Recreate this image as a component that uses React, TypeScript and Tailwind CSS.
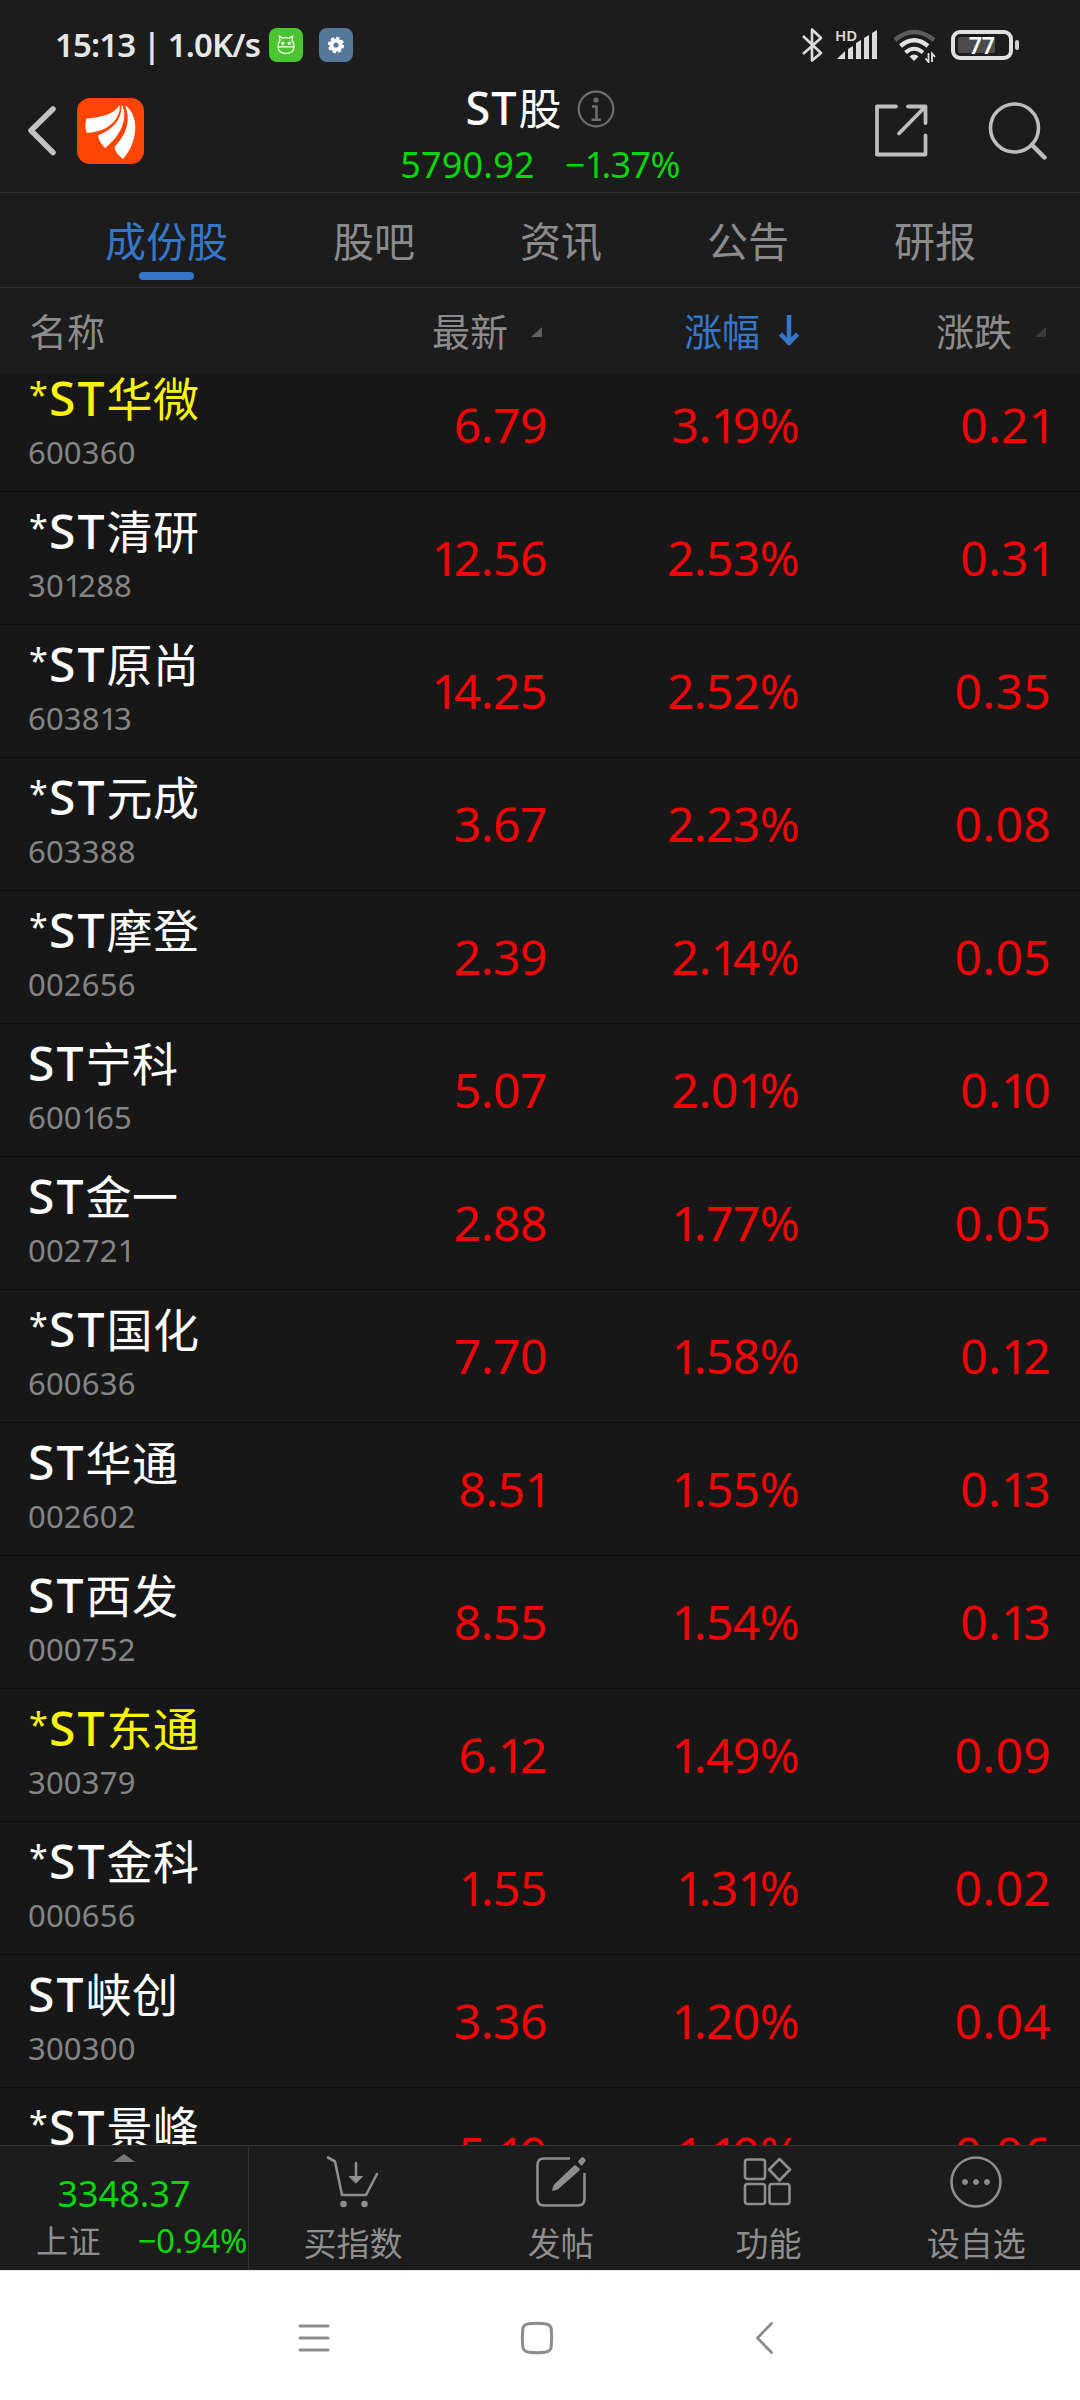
import type { ReactNode } from 'react';
import { clsx } from 'clsx';

interface Stock {
  name: string;
  code: string;
  price: string;
  percent: string;
  change: string;
  highlighted?: boolean;
}

const stocks: Stock[] = [
  { name: '*ST华微', code: '600360', price: '6.79', percent: '3.19%', change: '0.21', highlighted: true },
  { name: '*ST清研', code: '301288', price: '12.56', percent: '2.53%', change: '0.31' },
  { name: '*ST原尚', code: '603813', price: '14.25', percent: '2.52%', change: '0.35' },
  { name: '*ST元成', code: '603388', price: '3.67', percent: '2.23%', change: '0.08' },
  { name: '*ST摩登', code: '002656', price: '2.39', percent: '2.14%', change: '0.05' },
  { name: 'ST宁科', code: '600165', price: '5.07', percent: '2.01%', change: '0.10' },
  { name: 'ST金一', code: '002721', price: '2.88', percent: '1.77%', change: '0.05' },
  { name: '*ST国化', code: '600636', price: '7.70', percent: '1.58%', change: '0.12' },
  { name: 'ST华通', code: '002602', price: '8.51', percent: '1.55%', change: '0.13' },
  { name: 'ST西发', code: '000752', price: '8.55', percent: '1.54%', change: '0.13' },
  { name: '*ST东通', code: '300379', price: '6.12', percent: '1.49%', change: '0.09', highlighted: true },
  { name: '*ST金科', code: '000656', price: '1.55', percent: '1.31%', change: '0.02' },
  { name: 'ST峡创', code: '300300', price: '3.36', percent: '1.20%', change: '0.04' },
  { name: '*ST景峰', code: '000908', price: '5.19', percent: '1.19%', change: '0.06' },
];

const tabs = ['成份股', '股吧', '资讯', '公告', '研报'];

// The figure "1" is set tighter than the other digits
function Figures({ children }: { children: string }) {
  return (
    <>
      {children.split(/(1)/).filter(Boolean).map((part, index) =>
        part === '1' ? <span key={index} className="-tracking-[0.11em]">1</span> : part
      )}
    </>
  );
}

function StockName({ name }: { name: string }) {
  const starred = name.startsWith('*');
  return (
    <>
      {starred && <span className="inline-block w-[21px] pl-px align-[9px] text-[34px] leading-none">*</span>}
      <span className="text-[48px] font-medium tracking-[2px]">ST</span>
      {name.replace(/^\*?ST/, '')}
    </>
  );
}

function StatusBar() {
  return (
    <div className="flex h-20 items-center pt-2.5 pl-[55px] text-[#e6e6e6]">
      <span className="w-[214px] whitespace-nowrap text-[33px] leading-10 font-semibold -tracking-[0.9px]">15:13 | 1.0K/s</span>
      <div className="flex size-[34px] items-center justify-center rounded-lg bg-[#4bc431]">
        <svg width="20" height="22" viewBox="0 0 20 22" fill="none" stroke="#eaffdf" strokeWidth="1.4">
          <path d="M4 6.5 3.3 2.2 6.8 4.2Q10 3 13.2 4.2L16.7 2.2 16 6.5Q18 9 18 12.5C18 17 14.500 19.500 10 19.500S2 17 2 12.500Q2 9 4 6.500ZM2.200 12.800H17.800" />
          <circle cx="6.800" cy="9.300" r="1" fill="#eaffdf" />
          <circle cx="13.200" cy="9.300" r="1" fill="#eaffdf" />
        </svg>
      </div>
      <div className="ml-4 flex size-[34px] items-center justify-center rounded-lg bg-[#54779a]">
        <svg width="18" height="18" viewBox="-9 -9 18 18">
          <circle r="4.600" fill="none" stroke="#fff" strokeWidth="4" />
          <circle r="6.900" fill="none" stroke="#fff" strokeWidth="2.600" strokeDasharray="3.200 2.220" />
        </svg>
      </div>
      <svg className="ml-[448px]" width="24" height="36" viewBox="801 27 24 36" fill="none" stroke="#dcdcdc" strokeWidth="2.600">
        <path d="M803 36 821 53 812 60.500V29.500L821 38 803 54" strokeLinejoin="round" />
      </svg>
      <svg className="ml-2.5 overflow-visible" width="44" height="36" viewBox="835 27 44 36" fill="#dcdcdc">
        <path d="M837 59 845 51V59ZM848 49 853 46V59H848ZM856 43 861 40V59H856ZM864 38 869 35V59H864ZM872 33 877 30V59H872Z" />
        <text x="835" y="40.500" fontSize="15" fontWeight="600">HD</text>
      </svg>
      <svg className="ml-[13px]" width="46" height="36" viewBox="892 27 46 36" fill="none">
        <path d="M895 40Q914 24 934 40" stroke="#5c5c5c" strokeWidth="4.500" />
        <path d="M900.500 46Q914 34.500 928 46" stroke="#e2e2e2" strokeWidth="4.500" />
        <path d="M905.500 52.500Q914 45 923 52.500" stroke="#e2e2e2" strokeWidth="4" />
        <path d="M914 61 909.500 56.500Q914 52.500 918.500 56.500Z" fill="#e2e2e2" />
        <path d="M928.500 53V62L925.500 58.500M932 62V53.500L935 57" stroke="#e2e2e2" strokeWidth="1.800" />
      </svg>
      <div className="ml-[13px] flex h-[30px] w-[62px] items-center rounded-[9px] border-4 border-[#e0e0e0] pl-[3px]">
        <div className="flex h-4 w-[37px] items-center justify-end rounded-xs bg-[#4b4b4b] text-[23px] font-semibold text-white">
          77
        </div>
      </div>
      <div className="ml-0.5 h-2.5 w-1 rounded-full bg-[#cfcfcf]" />
    </div>
  );
}

function Header() {
  return (
    <header className="flex h-[113px] border-b border-[#333333]">
      <div className="flex w-[300px] items-start pt-[18px] pl-[26px]">
        <svg width="32" height="66" viewBox="26 98 32 66" fill="none" stroke="#c2c2c2" strokeWidth="5.500" strokeLinecap="round" strokeLinejoin="round">
          <path d="M53 109 31 130.500 53 152.500" />
        </svg>
        <svg className="ml-[19px]" width="67" height="66" viewBox="0 0 67 66">
          <rect width="67" height="66" rx="13" fill="#ff4503" />
          <g fill="#fff">
            <path d="M42.500 7C44 15 38 33 10 35Q7 29 9.500 20.500C30 19 38 14 42.500 7Z" />
            <path d="M44.500 6.500C50 14 49 34 28 50Q22 44 21 37.500C39 30 45 19 44.500 6.500Z" />
            <path d="M48 7C63 18 61 44 46 61Q38 55 37.500 49C50 36 54 22 48 7Z" />
          </g>
        </svg>
      </div>
      <div className="flex flex-1 flex-col items-center">
        <div className="flex items-center">
          <h1 className="text-[45px] leading-14 font-medium tracking-[1px] text-white">ST<span className="ml-px text-[43px] font-normal">股</span></h1>
          <svg className="ml-3.5" width="38" height="38" viewBox="0 0 38 38" fill="none" stroke="#6c6c6c" strokeWidth="2.200">
            <circle cx="19" cy="19" r="17.300" />
            <path d="M15 16.500H19.500V29.500M14.500 29.700H24" strokeWidth="2.600" />
            <circle cx="19" cy="10" r="1.500" fill="#6c6c6c" />
          </svg>
        </div>
        <div className="mt-1.5 flex gap-[30px] text-[36px] leading-11 text-[#06d50c]">
          <span className="tracking-[0.2px]">5790.92</span>
          <span className="-tracking-[0.6px]"><Figures>−1.37%</Figures></span>
        </div>
      </div>
      <div className="flex w-[300px] items-start justify-end gap-[57px] pt-5 pr-8">
        <svg width="56" height="60" viewBox="873 100 56 60" fill="none" stroke="#bdbdbd" strokeWidth="3.800" strokeLinecap="round" strokeLinejoin="round">
          <path d="M896 106.500H877V154.500H925.500V135.500M908 106.500H925.500V123M925 107 899 133.500" />
        </svg>
        <svg width="62" height="60" viewBox="986 100 62 60" fill="none" stroke="#bdbdbd" strokeLinecap="round">
          <circle cx="1014.500" cy="128" r="24" strokeWidth="3.600" />
          <path d="M1032 145 1044.500 157.500" strokeWidth="4.500" />
        </svg>
      </div>
    </header>
  );
}

function Tabs() {
  return (
    <nav className="flex h-[95px] gap-[105px] border-b border-[#333333] pt-5 pl-[105px] text-[41px] leading-14 text-[#8b8b8d]">
      {tabs.map((tab, index) => (
        <div key={tab} className={clsx('flex flex-col items-center', index === 0 && 'text-[#3477c9]')}>
          {tab}
          {index === 0 && <div className="mt-[3px] h-2 w-[55px] rounded-full bg-[#3477c9]" />}
        </div>
      ))}
    </nav>
  );
}

function SortMark({ className }: { className: string }) {
  return (
    <svg width="11" height="10" viewBox="0 0 11 10" className={className}>
      <path d="M11 0V10H0Z" fill="currentColor" />
    </svg>
  );
}

function ColumnHeader() {
  return (
    <div className="flex h-[86px] items-center pl-[29px] text-[38px] leading-[50px] text-[#8b8b8d]">
      <span className="w-[279px]">名称</span>
      <span className="flex w-[234px] items-center justify-end">最新<SortMark className="mt-0.5 ml-[23px] text-[#606060]" /></span>
      <span className="flex w-[257px] items-center justify-end text-[#3477c9]">
        涨幅
        <svg className="ml-[19px]" width="20" height="34" viewBox="0 0 20 34" fill="none" stroke="currentColor" strokeWidth="4.500">
          <path d="M10 1V29M1.500 20 10 29 18.500 20" strokeLinejoin="round" />
        </svg>
      </span>
      <span className="flex w-[247px] items-center justify-end">涨跌<SortMark className="mt-0.5 ml-[23px] text-[#3a3a3a]" /></span>
    </div>
  );
}

function StockRow({ stock }: { stock: Stock }) {
  return (
    <div className="flex h-[133px] shrink-0 border-b border-[#0c0c0c] pl-7">
      <div className="w-[280px] pt-[11px]">
        <div className={clsx('h-14 text-[46px] leading-14 tracking-[0.5px] whitespace-nowrap', stock.highlighted ? 'text-[#fbf30c]' : 'text-white')}>
          <StockName name={stock.name} />
        </div>
        <div className="mt-2 text-[31px] leading-9 tracking-[0.2px] text-[#858585]"><Figures>{stock.code}</Figures></div>
      </div>
      <div className="flex flex-1 items-center text-right text-[48px] leading-14 text-[#f20408]">
        <span className="w-[239px] -tracking-[0.5px]"><Figures>{stock.price}</Figures></span>
        <span className="w-[252px] -tracking-[0.6px]"><Figures>{stock.percent}</Figures></span>
        <span className="w-[252px] tracking-[0.3px]"><Figures>{stock.change}</Figures></span>
      </div>
    </div>
  );
}

function BottomItem({ label, children }: { label: string; children: ReactNode }) {
  return (
    <div className="flex flex-1 flex-col items-center pt-2">
      <svg width="56" height="56" viewBox="0 0 56 56" fill="none" stroke="#8e8e8e" strokeWidth="2.600" strokeLinecap="round" strokeLinejoin="round">
        {children}
      </svg>
      <span className="mt-3.5 text-[33px] leading-10 text-[#8e8e8e]">{label}</span>
    </div>
  );
}

function BottomBar() {
  return (
    <div className="flex h-[125px] border-t border-[#333333] bg-[#1c1c1c]">
      <div className="flex w-[249px] flex-col items-center border-r border-[#333333] pt-2">
        <svg width="22" height="8" viewBox="0 0 22 8">
          <path d="M0 8 11 0 22 8Z" fill="#777777" />
        </svg>
        <span className="mt-2.5 text-[36px] leading-11 text-[#06d50c]">3348.37</span>
        <div className="mt-[5px] flex w-full justify-between pr-px pl-9 text-[33px] leading-10">
          <span className="text-[32px] tracking-[0.5px] text-[#8e8e8e]">上证</span>
          <span className="-tracking-[0.4px] text-[#06d50c]">−0.94%</span>
        </div>
      </div>
      <BottomItem label="买指数">
        <path d="M3 3.500 10 7.500 17 41H41L52 20M31 9V26" />
        <path d="M24.500 22.500H37.500L31 29Z" fill="#8e8e8e" strokeWidth="1" />
        <circle cx="18.500" cy="50" r="2" fill="#8e8e8e" />
        <circle cx="39.500" cy="50" r="2" fill="#8e8e8e" />
      </BottomItem>
      <BottomItem label="发帖">
        <path d="M37 4.500H11Q4.500 4.500 4.500 11V45Q4.500 51.500 11 51.500H45Q51.500 51.500 51.500 45V19" strokeLinecap="butt" />
        <path d="M42 12.500 45.500 15.500 24.500 34 20.500 35.500 22 31.500ZM46.500 7.500 49.500 4.500 51.500 6.500 48.500 10Z" fill="#8e8e8e" />
      </BottomItem>
      <BottomItem label="功能">
        <rect x="5" y="5.500" width="20" height="19.500" rx="2.500" />
        <rect x="5" y="30" width="20" height="20" rx="2.500" />
        <rect x="29.500" y="30" width="20" height="20" rx="2.500" />
        <path d="M39.500 5 50 15.500 39.500 26.500 29 15.500Z" />
      </BottomItem>
      <BottomItem label="设自选">
        <circle cx="28" cy="28" r="24.500" />
        <g fill="#8e8e8e" strokeWidth="1">
          <circle cx="17" cy="28" r="2.500" />
          <circle cx="28" cy="28" r="2.500" />
          <circle cx="39" cy="28" r="2.500" />
        </g>
      </BottomItem>
    </div>
  );
}

function SystemNav() {
  return (
    <div className="flex h-[130px] border-t border-[#e5e5e5] bg-white pt-[49px] pl-[297px]">
      <svg width="34" height="36" viewBox="0 0 34 36" stroke="#8c8c8c" strokeWidth="3" strokeLinecap="round">
        <path d="M3 6H31M3 18H31M3 30H31" />
      </svg>
      <svg className="ml-[188px]" width="36" height="36" viewBox="0 0 36 36" fill="none" stroke="#8c8c8c" strokeWidth="3">
        <path d="M10 3.800Q18 2.800 26 3.800Q32 4.200 32.300 10Q33 18 32.300 26Q32 31.800 26 32.200Q18 33.200 10 32.200Q4 31.800 3.700 26Q3 18 3.700 10Q4 4.200 10 3.800Z" />
      </svg>
      <svg className="ml-[199px]" width="20" height="36" viewBox="0 0 20 36" fill="none" stroke="#8c8c8c" strokeWidth="2.800" strokeLinecap="round" strokeLinejoin="round">
        <path d="M17.500 3.500 3.500 18 17.500 32.500" />
      </svg>
    </div>
  );
}

export default function App() {
  return (
    <div className="flex h-[2400px] w-[1080px] flex-col overflow-hidden bg-[#1c1c1c] font-['Noto_Sans','Noto_Sans_CJK_SC',sans-serif]">
      <StatusBar />
      <Header />
      <Tabs />
      <ColumnHeader />
      <main className="flex min-h-0 flex-1 flex-col overflow-hidden bg-[#171717]">
        <div className="-mt-[15px] flex flex-col">
          {stocks.map((stock) => (
            <StockRow key={stock.code} stock={stock} />
          ))}
        </div>
      </main>
      <BottomBar />
      <SystemNav />
    </div>
  );
}
